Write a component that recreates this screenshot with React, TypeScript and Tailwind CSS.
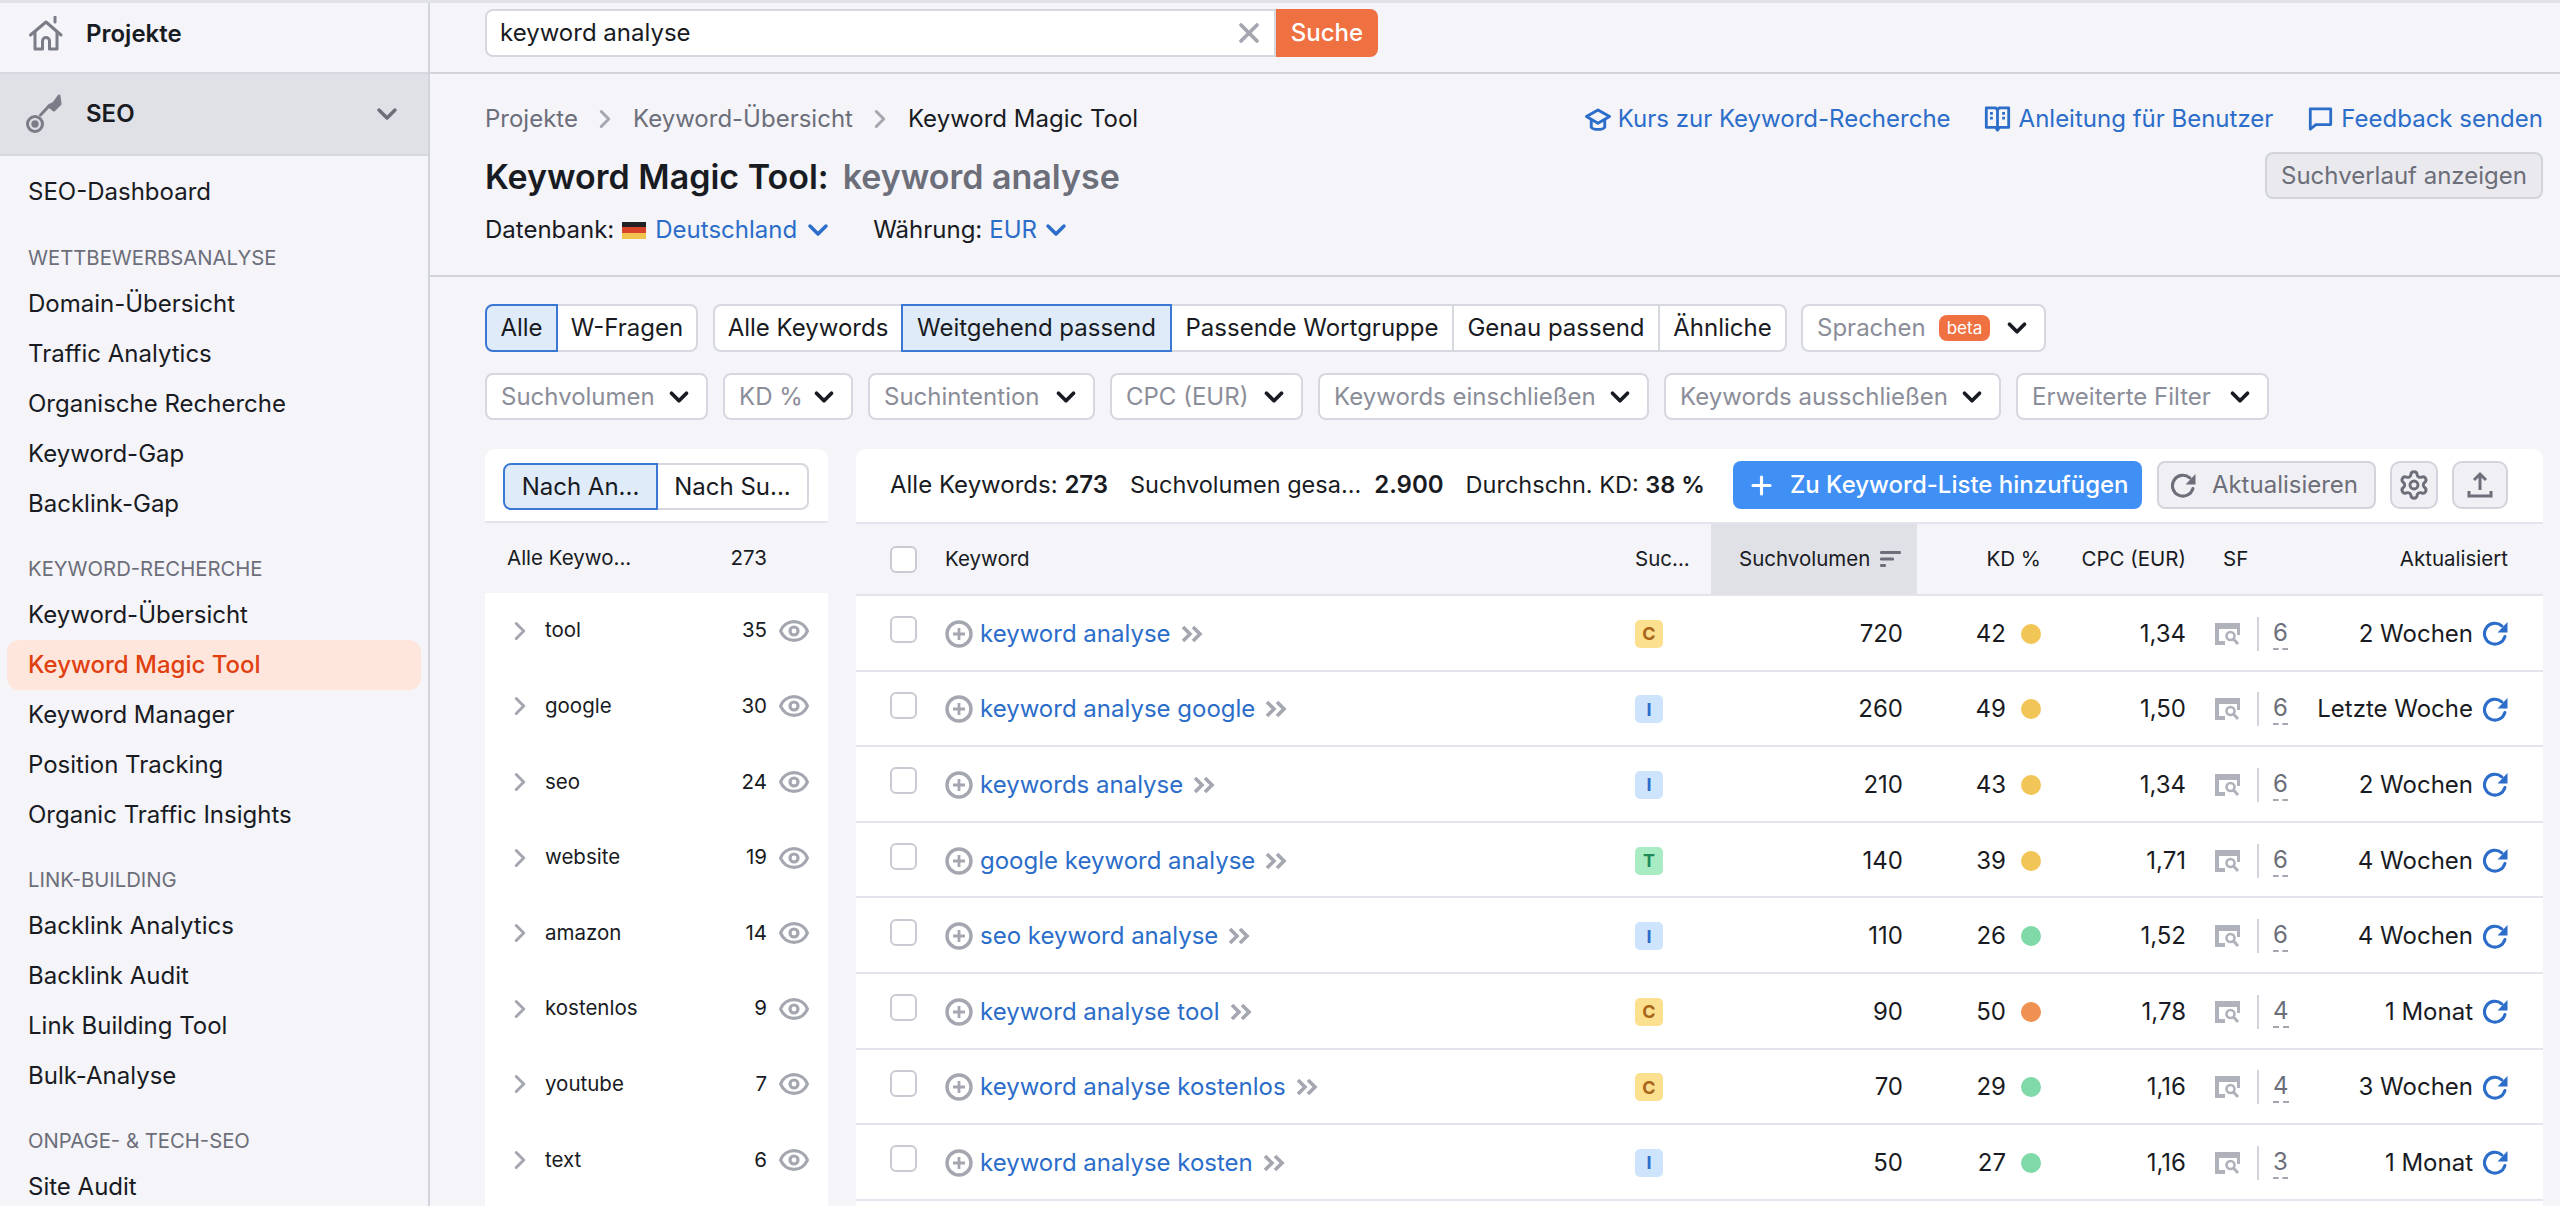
import { ChevronDown, ChevronRight, Eye, Plus, Settings, X } from "lucide-react";

const groups = [
  { label: "Wettbewerbsanalyse", items: ["Domain-Übersicht", "Traffic Analytics", "Organische Recherche", "Keyword-Gap", "Backlink-Gap"] },
  { label: "Keyword-Recherche", items: ["Keyword-Übersicht", "Keyword Magic Tool", "Keyword Manager", "Position Tracking", "Organic Traffic Insights"] },
  { label: "Link-Building", items: ["Backlink Analytics", "Backlink Audit", "Link Building Tool", "Bulk-Analyse"] },
  { label: "Onpage- & Tech-SEO", items: ["Site Audit"] },
];

const topics = [
  ["tool", "35"],
  ["google", "30"],
  ["seo", "24"],
  ["website", "19"],
  ["amazon", "14"],
  ["kostenlos", "9"],
  ["youtube", "7"],
  ["text", "6"],
];

const rows = [
  { kw: "keyword analyse", intent: "C", vol: "720", kd: "42", dot: "bg-[#f2c557]", cpc: "1,34", sf: "6", date: "2 Wochen" },
  { kw: "keyword analyse google", intent: "I", vol: "260", kd: "49", dot: "bg-[#f2c557]", cpc: "1,50", sf: "6", date: "Letzte Woche" },
  { kw: "keywords analyse", intent: "I", vol: "210", kd: "43", dot: "bg-[#f2c557]", cpc: "1,34", sf: "6", date: "2 Wochen" },
  { kw: "google keyword analyse", intent: "T", vol: "140", kd: "39", dot: "bg-[#f2c557]", cpc: "1,71", sf: "6", date: "4 Wochen" },
  { kw: "seo keyword analyse", intent: "I", vol: "110", kd: "26", dot: "bg-[#7fd9a8]", cpc: "1,52", sf: "6", date: "4 Wochen" },
  { kw: "keyword analyse tool", intent: "C", vol: "90", kd: "50", dot: "bg-[#ef9150]", cpc: "1,78", sf: "4", date: "1 Monat" },
  { kw: "keyword analyse kostenlos", intent: "C", vol: "70", kd: "29", dot: "bg-[#7fd9a8]", cpc: "1,16", sf: "4", date: "3 Wochen" },
  { kw: "keyword analyse kosten", intent: "I", vol: "50", kd: "27", dot: "bg-[#7fd9a8]", cpc: "1,16", sf: "3", date: "1 Monat" },
];

const intentStyle: Record<string, string> = {
  C: "bg-[#fbe08f] text-[#a9651a]",
  I: "bg-[#cde4fc] text-[#2b6dc9]",
  T: "bg-[#a9ecc4] text-[#1f8a57]",
};

const gridCols = "grid grid-cols-[89px_690px_76px_206px_124px_145px_114px_208px]";

function HomeIcon() {
  return (
    <svg viewBox="0 0 36 36" className="h-[36px] w-[36px] text-[#7a7c87]" fill="none" stroke="currentColor" strokeWidth="3" strokeLinejoin="round" strokeLinecap="round">
      <path d="M2.5 19 18 6l15 13" />
      <path d="M7 16v17h7.5v-8a3.5 3.5 0 0 1 7 0v8H29V16" />
      <path d="M27 1v5" />
    </svg>
  );
}

function KeyIcon() {
  return (
    <svg viewBox="0 0 40 40" className="h-[40px] w-[40px] text-[#7a7c87]" fill="none" stroke="currentColor" strokeWidth="3" strokeLinecap="round" strokeLinejoin="round">
      <circle cx="9" cy="30" r="7.5" />
      <circle cx="9" cy="30" r="2.2" fill="currentColor" />
      <path d="M14.5 21 24 11" />
      <path d="M23 12l5-3 5-7 1 8-6 6z" fill="currentColor" />
    </svg>
  );
}

function HatIcon() {
  return (
    <svg viewBox="0 0 28 26" className="h-[25px] w-[28px]" fill="none" stroke="#2b6dc9" strokeWidth="3" strokeLinejoin="round">
      <path d="M14 3 2 10l12 7 12-7z" />
      <path d="M7 13v8c2 3 12 3 14 0v-8" />
    </svg>
  );
}

function BookIcon() {
  return (
    <svg viewBox="0 0 28 30" className="h-[28px] w-[27px]" fill="none" stroke="#2b6dc9" strokeWidth="3" strokeLinejoin="round">
      <path d="M2 3h10l2 2 2-2h10v21H16l-2 3-2-3H2z" />
      <path d="M14 5v20" />
      <path d="M6 9h3M6 14h3M19 9h3M19 14h3" />
    </svg>
  );
}

function BubbleIcon() {
  return (
    <svg viewBox="0 0 26 28" className="h-[26px] w-[25px]" fill="none" stroke="#2b6dc9" strokeWidth="3" strokeLinejoin="round">
      <path d="M2 3h22v17H8l-6 5z" />
    </svg>
  );
}

function RefreshIcon({ color }: { color: string }) {
  return (
    <svg viewBox="0 0 24 24" className="h-[25px] w-[25px]" fill="none">
      <path d="M21 15a10 10 0 1 1-3-10.3" stroke={color} strokeWidth="3" strokeLinecap="round" />
      <path d="M23.5 1v10H14z" fill={color} />
    </svg>
  );
}

function SerpIcon() {
  return (
    <svg viewBox="0 0 25 22" className="h-[22px] w-[25px]" fill="none">
      <path d="M0 0h25v12h-3V6H4v12h6v4H0z" fill="#b0b2bb" />
      <circle cx="15.5" cy="13" r="4" stroke="#b0b2bb" strokeWidth="2.6" />
      <path d="m18.5 16 4.5 5" stroke="#b0b2bb" strokeWidth="3" />
    </svg>
  );
}

function UploadIcon() {
  return (
    <svg viewBox="0 0 26 28" className="h-[28px] w-[26px]" fill="none" stroke="#6c6e79" strokeWidth="3">
      <path d="M13 19V3M7 9l6-6 6 6" />
      <path d="M2 20v5h22v-5" />
    </svg>
  );
}

function SortIcon() {
  return (
    <svg viewBox="0 0 22 16" className="h-[16px] w-[22px]" fill="#6c6e79">
      <rect x="0" y="0" width="21" height="3" rx="1.2" />
      <rect x="0" y="6.5" width="14" height="3" rx="1.2" />
      <rect x="0" y="13" width="6" height="3" rx="1.2" />
    </svg>
  );
}

function Segment({ w, label, active, first, last }: { w: string; label: string; active?: boolean; first?: boolean; last?: boolean }) {
  return (
    <div
      className={`flex h-full items-center justify-center whitespace-nowrap border-2 ${w} ${first ? "rounded-l-[8px]" : "-ml-[2px]"} ${last ? "rounded-r-[8px]" : ""} ${active ? "z-10 border-[#3b78d4] bg-[#e0ebfa]" : "border-[#d6d8df] bg-white"}`}
    >
      {label}
    </div>
  );
}

function Select({ w, label, badge }: { w: string; label: string; badge?: boolean }) {
  return (
    <div className={`flex h-full items-center justify-between rounded-[8px] border-2 border-[#d6d8df] bg-white pl-[14px] pr-[12px] ${w}`}>
      <span className="flex items-center whitespace-nowrap text-[#8b8d98]">
        {label}
        {badge && (
          <span className="ml-[13px] rounded-[8px] bg-[#ef7040] px-[8px] py-[3px] text-[17px] leading-[20px] text-white">beta</span>
        )}
      </span>
      <ChevronDown className="h-[30px] w-[30px] shrink-0 text-[#191b23]" strokeWidth={3} />
    </div>
  );
}

export default function App() {
  return (
    <div className="flex h-[1206px] w-[2560px] flex-col overflow-hidden border-t-[3px] border-[#e2e3e8] bg-[#f4f4f9] font-[Inter,sans-serif] text-[24px] text-[#191b23]">
      <div className="flex min-h-0 flex-1">
        {/* Sidebar */}
        <aside className="w-[430px] shrink-0 border-r-2 border-[#d1d4db]">
          <div className="flex h-[69px] items-center gap-[22px] pb-[8px] pl-[28px] font-semibold">
            <HomeIcon />
            <span>Projekte</span>
          </div>
          <div className="flex h-[84px] items-center justify-between border-y-2 border-[#d6d8df] bg-[#e0e1e7] pl-[26px] pr-[25px] font-semibold">
            <div className="flex items-center gap-[20px]">
              <KeyIcon />
              <span>SEO</span>
            </div>
            <ChevronDown className="h-[32px] w-[32px] text-[#6c6e79]" strokeWidth={2.6} />
          </div>
          <div className="mt-[11px] flex h-[51px] items-center pb-[1px] pl-[28px]">SEO-Dashboard</div>
          {groups.map((g) => (
            <div key={g.label}>
              <div className="mt-[19px] flex h-[42px] items-center pl-[28px] text-[20.3px] uppercase text-[#6c6e79]">{g.label}</div>
              {g.items.map((item) =>
                item === "Keyword Magic Tool" ? (
                  <div key={item} className="mx-[7px] flex h-[50px] items-center rounded-[12px] bg-[#ffe6dc] pl-[21px] font-medium text-[#e0400f]">
                    {item}
                  </div>
                ) : (
                  <div key={item} className="flex h-[50px] items-center pl-[28px]">
                    {item}
                  </div>
                ),
              )}
            </div>
          ))}
        </aside>

        <main className="flex min-w-0 flex-1 flex-col">
          {/* Search bar */}
          <div className="flex h-[71px] shrink-0 border-b-2 border-[#d1d4db] pl-[55px] pt-[6px]">
            <div className="flex h-[48px] w-[791px] items-center justify-between rounded-l-[8px] border-2 border-[#d6d8df] bg-white pl-[13px] pr-[9px]">
              <span>keyword analyse</span>
              <X className="h-[32px] w-[32px] text-[#a4a6b0]" strokeWidth={2.8} />
            </div>
            <div className="flex h-[48px] w-[102px] items-center justify-center rounded-r-[8px] bg-[#ef7040] font-medium text-white">Suche</div>
          </div>

          {/* Page header */}
          <div className="flex h-[203px] shrink-0 justify-between border-b-2 border-[#d1d4db] pl-[55px] pr-[17px] pt-[30px]">
            <div>
              <div className="flex h-[30px] items-center text-[#6c6e79]">
                <span>Projekte</span>
                <ChevronRight className="mx-[12.5px] h-[30px] w-[30px] text-[#a4a6b0]" strokeWidth={2.4} />
                <span>Keyword-Übersicht</span>
                <ChevronRight className="mx-[12.5px] h-[30px] w-[30px] text-[#a4a6b0]" strokeWidth={2.4} />
                <span className="text-[#191b23]">Keyword Magic Tool</span>
              </div>
              <div className="mt-[20px] flex h-[44px] items-center text-[34px] font-semibold">
                <span>Keyword Magic Tool:</span>
                <span className="ml-[14px] text-[#6c6e79]">keyword analyse</span>
              </div>
              <div className="mt-[17px] flex h-[30px] items-center">
                <span>Datenbank:</span>
                <span className="ml-[8px] flex h-[17px] w-[24px] flex-col overflow-hidden">
                  <span className="flex-1 bg-[#222222]" />
                  <span className="flex-1 bg-[#d8432a]" />
                  <span className="flex-1 bg-[#f0c44f]" />
                </span>
                <span className="ml-[9px] text-[#2b6dc9]">Deutschland</span>
                <ChevronDown className="ml-[5px] mr-[2px] h-[32px] w-[32px] text-[#2b6dc9]" strokeWidth={2.6} />
                <span className="ml-[37px]">Währung:</span>
                <span className="ml-[7px] text-[#2b6dc9]">EUR</span>
                <ChevronDown className="ml-[3px] h-[32px] w-[32px] text-[#2b6dc9]" strokeWidth={2.6} />
              </div>
            </div>
            <div className="flex flex-col items-end">
              <div className="flex h-[30px] items-center text-[#2b6dc9]">
                <HatIcon />
                <span className="ml-[6px]">Kurs zur Keyword-Recherche</span>
                <span className="ml-[33px]"><BookIcon /></span>
                <span className="ml-[8px]">Anleitung für Benutzer</span>
                <span className="ml-[35px]"><BubbleIcon /></span>
                <span className="ml-[8px]">Feedback senden</span>
              </div>
              <div className="mt-[18px] flex h-[47px] w-[278px] items-center justify-center rounded-[8px] border-2 border-[#d1d4db] bg-[#e9e9ee] text-[#6c6e79]">
                Suchverlauf anzeigen
              </div>
            </div>
          </div>

          {/* Filters */}
          <div className="min-h-0 flex-1 pl-[55px] pt-[27px]">
            <div className="flex h-[48px]">
              <Segment w="w-[73px]" label="Alle" active first />
              <Segment w="w-[142px]" label="W-Fragen" last />
              <div className="ml-[15px] flex h-full">
                <Segment w="w-[190px]" label="Alle Keywords" first />
                <Segment w="w-[271px]" label="Weitgehend passend" active />
                <Segment w="w-[284px]" label="Passende Wortgruppe" />
                <Segment w="w-[208px]" label="Genau passend" />
                <Segment w="w-[129px]" label="Ähnliche" last />
              </div>
              <div className="ml-[14px] h-full">
                <Select w="w-[245px]" label="Sprachen" badge />
              </div>
            </div>
            <div className="mt-[21px] flex h-[47px] gap-[15px]">
              <Select w="w-[223px]" label="Suchvolumen" />
              <Select w="w-[130px]" label="KD %" />
              <Select w="w-[227px]" label="Suchintention" />
              <Select w="w-[193px]" label="CPC (EUR)" />
              <Select w="w-[331px]" label="Keywords einschließen" />
              <Select w="w-[337px]" label="Keywords ausschließen" />
              <Select w="w-[253px]" label="Erweiterte Filter" />
            </div>

            <div className="mt-[29px] flex h-[800px] gap-[28px]">
              {/* Topic groups */}
              <div className="w-[343px] shrink-0 rounded-t-[10px] bg-white">
                <div className="flex h-[74px] items-start border-b-2 border-[#e4e5ec] pl-[18px] pt-[14px]">
                  <div className="flex h-[47px] w-[306px]">
                    <Segment w="w-[155px]" label="Nach An..." active first />
                    <Segment w="w-[153px]" label="Nach Su..." last />
                  </div>
                </div>
                <div className="flex h-[70px] items-center justify-between bg-[#f4f4f9] pl-[22px] pr-[61px] text-[20.5px]">
                  <span>Alle Keywo...</span>
                  <span>273</span>
                </div>
                {topics.map(([name, n]) => (
                  <div key={name} className="flex h-[75.6px] items-center text-[20.5px]">
                    <ChevronRight className="ml-[20px] h-[30px] w-[30px] text-[#a4a6b0]" strokeWidth={2.4} />
                    <span className="ml-[10px] flex-1">{name}</span>
                    <span>{n}</span>
                    <Eye className="ml-[11px] mr-[18px] h-[32px] w-[32px] text-[#a4a6b0]" strokeWidth={2.4} />
                  </div>
                ))}
              </div>

              {/* Table */}
              <div className="w-[1687px] shrink-0 rounded-t-[10px] bg-white">
                <div className="flex h-[75px] items-center border-b-2 border-[#e4e5ec] pb-[1px] pl-[34px]">
                  <span>Alle Keywords: <b className="font-semibold">273</b></span>
                  <span className="ml-[22px] text-[23.5px]">Suchvolumen gesa...</span>
                  <b className="ml-[13px] font-semibold">2.900</b>
                  <span className="ml-[22px] text-[23.5px]">Durchschn. KD: <b className="font-semibold">38 %</b></span>
                  <div className="ml-[28px] flex h-[48px] w-[409px] items-center gap-[14px] rounded-[8px] bg-[#3f8ff5] pl-[14px] font-medium text-white">
                    <Plus className="h-[29px] w-[29px]" strokeWidth={2.6} />
                    <span>Zu Keyword-Liste hinzufügen</span>
                  </div>
                  <div className="ml-[15px] flex h-[48px] w-[219px] items-center gap-[16px] rounded-[8px] border-2 border-[#d1d4db] bg-[#f0f0f4] pl-[12px] text-[#6c6e79]">
                    <RefreshIcon color="#6c6e79" />
                    <span>Aktualisieren</span>
                  </div>
                  <div className="ml-[14px] flex h-[48px] w-[48px] items-center justify-center rounded-[10px] border-2 border-[#d1d4db] bg-[#f0f0f4]">
                    <Settings className="h-[32px] w-[32px] text-[#6c6e79]" strokeWidth={2.2} />
                  </div>
                  <div className="ml-[14px] flex h-[48px] w-[56px] items-center justify-center rounded-[10px] border-2 border-[#d1d4db] bg-[#f0f0f4]">
                    <UploadIcon />
                  </div>
                </div>

                <div className={`${gridCols} h-[72px] items-center border-b-2 border-[#e4e5ec] bg-[#f4f4f9] text-[20.5px]`}>
                  <div className="pl-[34px]">
                    <div className="h-[27px] w-[27px] rounded-[6px] border-2 border-[#c9cbd3] bg-white" />
                  </div>
                  <div>Keyword</div>
                  <div>Suc...</div>
                  <div className="flex h-full items-center gap-[10px] bg-[#e0e1e7] pl-[28px]">
                    Suchvolumen
                    <SortIcon />
                  </div>
                  <div className="text-right">KD %</div>
                  <div className="text-right">CPC (EUR)</div>
                  <div className="pl-[37px]">SF</div>
                  <div className="text-right">Aktualisiert</div>
                </div>

                {rows.map((r) => (
                  <div key={r.kw} className={`${gridCols} h-[75.6px] items-center border-b-2 border-[#e4e5ec] pt-[2px]`}>
                    <div className="pb-[8px] pl-[34px]">
                      <div className="h-[27px] w-[27px] rounded-[6px] border-2 border-[#c9cbd3] bg-white" />
                    </div>
                    <div className="flex items-center">
                      <svg viewBox="0 0 28 28" className="h-[28px] w-[28px]" fill="none" stroke="#a4a6b0" strokeWidth="3.4">
                        <circle cx="14" cy="14" r="12" />
                        <path d="M14 8v12M8 14h12" strokeWidth="2.8" />
                      </svg>
                      <span className="ml-[7px] text-[#2b6dc9]">{r.kw}</span>
                      <svg viewBox="0 0 22 18" className="ml-[10px] h-[18px] w-[22px]" fill="none" stroke="#a4a6b0" strokeWidth="3.6">
                        <path d="M2 2l7 7-7 7M12 2l7 7-7 7" />
                      </svg>
                    </div>
                    <div>
                      <div className={`flex h-[28px] w-[28px] items-center justify-center rounded-[5px] text-[18px] font-bold ${intentStyle[r.intent]}`}>
                        {r.intent}
                      </div>
                    </div>
                    <div className="pr-[14px] text-right">{r.vol}</div>
                    <div className="flex items-center justify-end">
                      <span>{r.kd}</span>
                      <span className={`ml-[15px] h-[20px] w-[20px] rounded-full ${r.dot}`} />
                    </div>
                    <div className="text-right">{r.cpc}</div>
                    <div className="flex items-center pl-[29px]">
                      <SerpIcon />
                      <span className="ml-[17px] h-[34px] w-[2px] bg-[#d1d4db]" />
                      <span className="ml-[14px] border-b-2 border-dashed border-[#a4a6b0] leading-[30px] text-[#6c6e79]">{r.sf}</span>
                    </div>
                    <div className="flex items-center justify-end gap-[10px]">
                      <span>{r.date}</span>
                      <RefreshIcon color="#2b6dc9" />
                    </div>
                  </div>
                ))}
              </div>
            </div>
          </div>
        </main>
      </div>
    </div>
  );
}
